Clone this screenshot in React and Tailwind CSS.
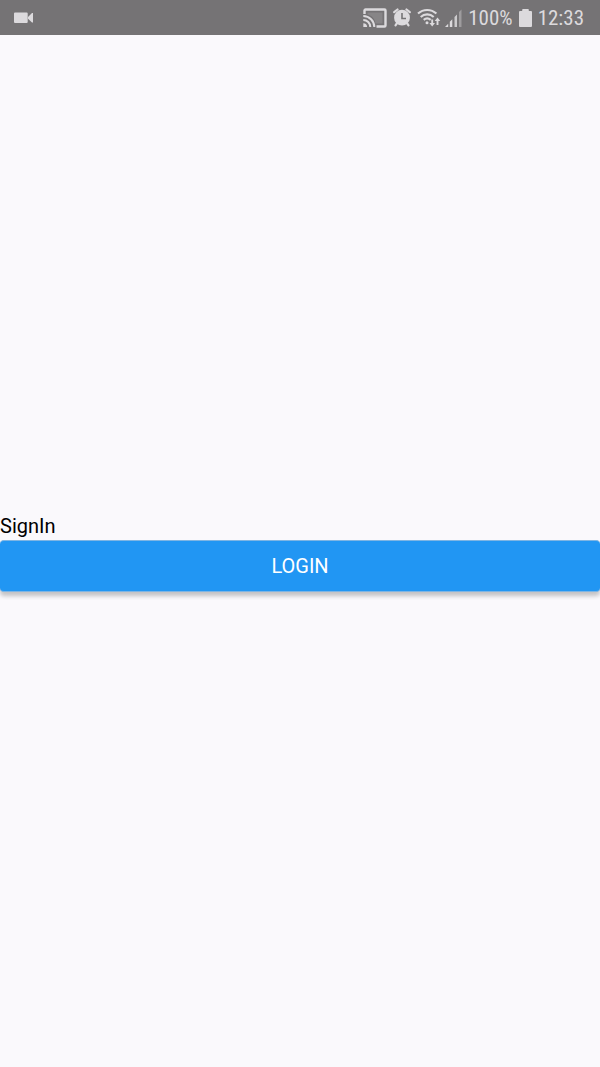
function VideoIcon() {
  return (
    <svg width="19" height="12" viewBox="0 0 19 12" fill="currentColor" aria-hidden="true">
      <path d="M1 .5h11.700a1 1 0 0 1 1 1V10a1 1 0 0 1-1 1H1a1 1 0 0 1-1-1V1.500a1 1 0 0 1 1-1zM14 5L18 1H19v9.500h-1L14 6.800z" />
    </svg>
  );
}

function CastIcon() {
  return (
    <svg width="24" height="20" viewBox="0 0 24 20" fill="none" stroke="currentColor" aria-hidden="true">
      <path d="M4.500 4.500h15v11h-7C12 11 9 7.500 4.500 6.500z" fill="currentColor" fillOpacity=".18" stroke="none" />
      <path d="M1.500 6V2.500a1 1 0 0 1 1-1h19a1 1 0 0 1 1 1v15a1 1 0 0 1-1 1H13.500" strokeWidth="2.400" />
      <path d="M.3 8a11 11 0 0 1 11 11M.3 12a7 7 0 0 1 7 7" strokeWidth="2" />
      <path d="M.3 15.200A3.800 3.800 0 0 1 4.100 19H.3z" fill="currentColor" stroke="none" />
    </svg>
  );
}

function AlarmIcon() {
  return (
    <svg width="18" height="19" viewBox="0 0 18 19" fill="none" stroke="currentColor" aria-hidden="true">
      <circle cx="9" cy="9.700" r="7.900" fill="currentColor" stroke="none" />
      <path d="M1.200 4.200L4.500 1.500M16.800 4.200L13.500 1.500" strokeWidth="2.200" strokeLinecap="round" />
      <path d="M3.800 15.500L2.500 17.300M14.200 15.500l1.300 1.800" strokeWidth="2.200" strokeLinecap="round" />
      <path d="M9 5v5.500h4" stroke="#757375" strokeWidth="1.600" />
    </svg>
  );
}

function WifiIcon() {
  return (
    <svg width="24" height="19" viewBox="0 0 24 19" fill="none" stroke="currentColor" aria-hidden="true">
      <path d="M1 5.600a13.500 13.500 0 0 1 18.400 0M3.700 8.900a9.500 9.500 0 0 1 13 0M6.700 11.900a5.400 5.400 0 0 1 7 0" strokeWidth="2.100" />
      <circle cx="10" cy="14.700" r="1.500" fill="currentColor" stroke="none" />
      <path d="M15.200 11.500v4.500M20.500 17v-5" strokeWidth="1.900" />
      <path d="M12.400 15h5.600l-2.800 3.500zM17.700 13h5.600l-2.800-3.500z" fill="currentColor" stroke="none" />
    </svg>
  );
}

function SignalIcon() {
  return (
    <svg width="17" height="18" viewBox="0 0 17 18" fill="currentColor" aria-hidden="true">
      <path d="M0 18l3.200-3.200V18zM4.800 12.800L7.300 10.300V18H4.800z" />
      <path d="M9.500 8l2.500-2.500V18H9.500z" opacity=".85" />
      <path d="M14 3l2.500-2.500V18H14z" opacity=".4" />
    </svg>
  );
}

function BatteryIcon() {
  return (
    <svg width="13" height="18" viewBox="0 0 13 18" fill="currentColor" aria-hidden="true">
      <path d="M4 0h5a.8.8 0 0 1 .8.8V2H12a1 1 0 0 1 1 1v14a1 1 0 0 1-1 1H1a1 1 0 0 1-1-1V3a1 1 0 0 1 1-1h2.200V.8A.8.8 0 0 1 4 0z" />
    </svg>
  );
}

export default function App() {
  return (
    <div className="flex min-h-screen flex-col bg-[#faf9fc] font-[Roboto,sans-serif] text-black">
      <header className="flex h-[35px] items-center justify-between bg-[#757375] pr-4 pl-3.5 text-[#dcdadd]">
        <VideoIcon />
        <div className="flex items-center font-['Roboto_Condensed',Roboto,sans-serif] text-[21px] leading-6">
          <div className="mr-1.5 flex items-center">
            <CastIcon />
            <span className="ml-1.5">
              <AlarmIcon />
            </span>
            <span className="ml-1.5">
              <WifiIcon />
            </span>
            <span className="ml-1">
              <SignalIcon />
            </span>
          </div>
          <span>100%</span>
          <span className="mx-1.5">
            <BatteryIcon />
          </span>
          <time>12:33</time>
        </div>
      </header>
      <main className="flex flex-1 flex-col justify-center pt-0.5">
        <p className="text-xl leading-7">SignIn</p>
        <button
          type="button"
          className="h-[52px] w-full rounded-[4px] border-y border-[#7fb5e3] bg-[#2196f3] text-xl text-white shadow-[0_4px_4px_rgba(0,0,0,0.22)]"
        >
          LOGIN
        </button>
      </main>
    </div>
  );
}
